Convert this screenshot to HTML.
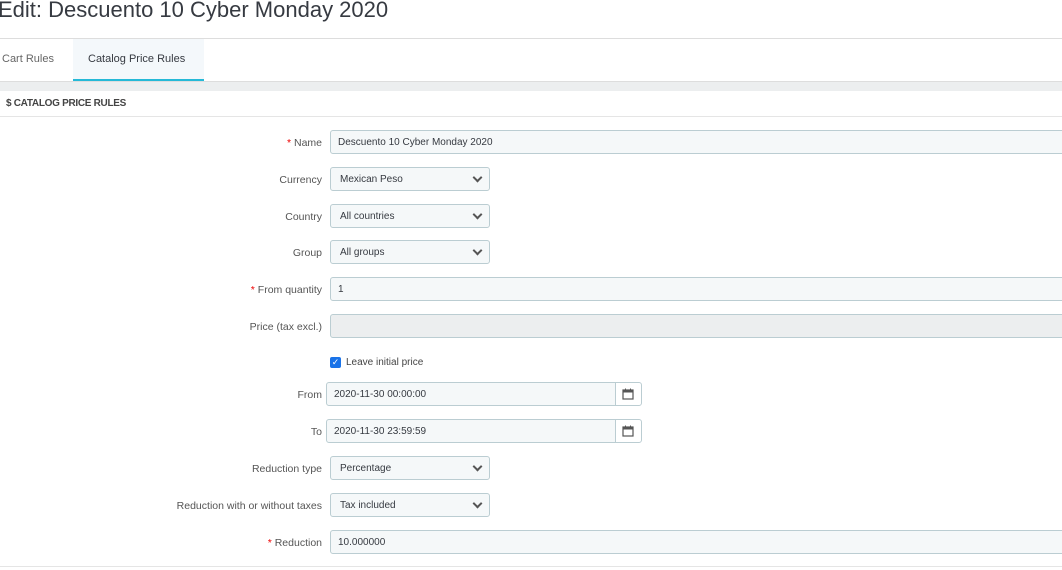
<!DOCTYPE html>
<html><head><style>
body{margin:0;width:1062px;height:570px;overflow:hidden;background:#fff;font-family:"Liberation Sans",sans-serif;color:#363a41;position:relative}
.a{position:absolute}
h1{position:absolute;left:-2px;top:-3px;margin:0;font-weight:normal;font-size:22px;color:#363a41}
.lbl{position:absolute;right:740px;font-size:10.5px;color:#555;text-align:right;white-space:nowrap;margin-top:1px}
.lbl b{color:#e00;font-weight:normal}
.inp{position:absolute;height:22px;border:1px solid #bbcdd2;border-radius:3px;background:#f5f8f9;font-size:10px;line-height:24px;padding-left:7px;box-sizing:content-box;color:#363a41}
.sel:after{content:"";position:absolute;right:8px;top:6px;width:5px;height:5px;border-right:2px solid #555;border-bottom:2px solid #555;transform:rotate(45deg)}
.cal{position:absolute;width:25px;height:22px;border:1px solid #bbcdd2;border-radius:0 3px 3px 0;background:#fff}
</style></head><body>
<h1>Edit: Descuento 10 Cyber Monday 2020</h1>
<div class="a" style="left:0;top:38px;width:1062px;height:1px;background:#ddd"></div>
<div class="a" style="left:2px;top:53px;font-size:11px;color:#666">Cart Rules</div>
<div class="a" style="left:73px;top:39px;width:131px;height:40px;background:#f4f8fb;border-bottom:3px solid #25b9d7"></div>
<div class="a" style="left:88px;top:53px;font-size:11px;color:#363a41">Catalog Price Rules</div>
<div class="a" style="left:0;top:81px;width:1062px;height:9px;background:#eceeef;border-top:1px solid #ddd"></div>
<div class="a" style="left:6px;top:98px;font-size:10px;font-weight:bold;color:#444;letter-spacing:-0.3px">$ CATALOG PRICE RULES</div>
<div class="a" style="left:0;top:116px;width:1062px;height:1px;background:#e5e5e5"></div>

<div class="lbl" style="top:136px"><b>*</b> Name</div>
<div class="inp" style="left:330px;top:130px;width:740px">Descuento 10 Cyber Monday 2020</div>
<div class="lbl" style="top:173px">Currency</div>
<div class="inp sel" style="left:330px;top:167px;padding-left:9px;width:149px">Mexican Peso</div>
<div class="lbl" style="top:210px">Country</div>
<div class="inp sel" style="left:330px;top:204px;width:149px;padding-left:9px">All countries</div>
<div class="lbl" style="top:246px">Group</div>
<div class="inp sel" style="left:330px;top:240px;width:149px;padding-left:9px">All groups</div>
<div class="lbl" style="top:283px"><b>*</b> From quantity</div>
<div class="inp" style="left:330px;top:277px;width:740px">1</div>
<div class="lbl" style="top:320px">Price (tax excl.)</div>
<div class="inp" style="left:330px;top:314px;width:740px;background:#eceeef"></div>
<div class="a" style="left:330px;top:357px;width:11px;height:11px;background:#1a73e8;border-radius:2px;color:#fff;font-size:9px;line-height:11px;text-align:center">✓</div>
<div class="a" style="left:346px;top:357px;font-size:10px;color:#444">Leave initial price</div>
<div class="lbl" style="top:388px">From</div>
<div class="inp" style="left:326px;top:382px;width:281px;border-radius:3px 0 0 3px">2020-11-30 00:00:00</div>
<div class="cal" style="left:615px;top:382px"></div>
<div class="lbl" style="top:425px">To</div>
<div class="inp" style="left:326px;top:419px;width:281px;border-radius:3px 0 0 3px">2020-11-30 23:59:59</div>
<div class="cal" style="left:615px;top:419px"></div>
<svg class="a" style="left:622px;top:388px" width="12" height="12"><rect x="1" y="2" width="10" height="9" fill="none" stroke="#555" stroke-width="1.2"/><rect x="1" y="2" width="10" height="2.5" fill="#555"/><path d="M3.5 0.5v2.5M8.5 0.5v2.5" stroke="#555"/></svg>
<svg class="a" style="left:622px;top:425px" width="12" height="12"><rect x="1" y="2" width="10" height="9" fill="none" stroke="#555" stroke-width="1.2"/><rect x="1" y="2" width="10" height="2.5" fill="#555"/><path d="M3.5 0.5v2.5M8.5 0.5v2.5" stroke="#555"/></svg>
<div class="lbl" style="top:462px">Reduction type</div>
<div class="inp sel" style="left:330px;top:456px;width:149px;padding-left:9px">Percentage</div>
<div class="lbl" style="top:499px">Reduction with or without taxes</div>
<div class="inp sel" style="left:330px;top:493px;width:149px;padding-left:9px">Tax included</div>
<div class="lbl" style="top:536px"><b>*</b> Reduction</div>
<div class="inp" style="left:330px;top:530px;width:740px">10.000000</div>
<div class="a" style="left:0;top:566px;width:1062px;height:1px;background:#e5e5e5"></div>
</body></html>
